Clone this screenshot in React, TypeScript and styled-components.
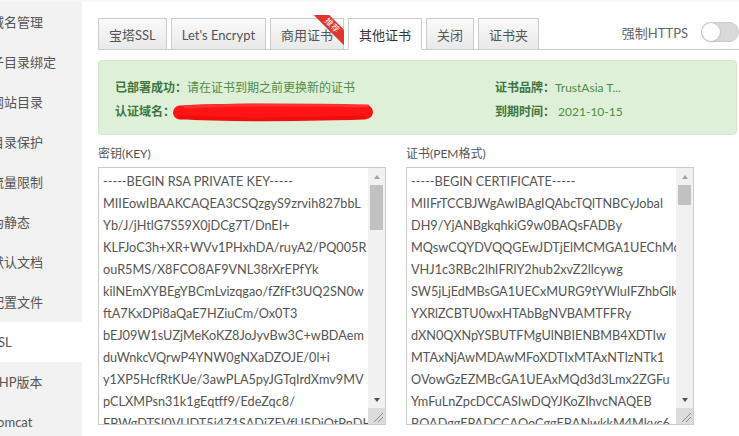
import React from "react";
import styled, { createGlobalStyle } from "styled-components";

const FONT = `"Lato", "Noto Sans CJK SC", sans-serif`;

const Global = createGlobalStyle`
  html, body { margin: 0; padding: 0; background: #fff; }
  body { font-family: ${FONT}; font-size: 13px; color: #555; }
  *, *::before, *::after { box-sizing: border-box; }
`;

const Page = styled.div`
  width: 739px;
  height: 436px;
  overflow: hidden;
  display: flex;
  border-top: 2px solid #f7f7f7;
`;

const Sidebar = styled.nav`
  width: 82px;
  flex: none;
  background: #f2f2f2;
  display: flex;
  flex-direction: column;
`;

const NavItem = styled.div<{ $active?: boolean }>`
  height: 40px;
  flex: none;
  line-height: 40px;
  font-size: 13px;
  color: #555;
  white-space: nowrap;
  overflow: hidden;
  text-indent: -9px;
  background: ${(p) => (p.$active ? "#fff" : "transparent")};
`;

const Main = styled.main`
  flex: 1;
  min-width: 0;
  overflow: hidden;
  padding: 16px 0 0 16px;
  display: flex;
  flex-direction: column;
`;

const TabBar = styled.div`
  display: flex;
  height: 32px;
  flex: none;
  border-bottom: 1px solid #ccc;
`;

const Tabs = styled.div`
  display: flex;
  gap: 4px;
`;

const Tab = styled.div<{ $active?: boolean }>`
  position: relative;
  height: 32px;
  padding: 2px 10px 0;
  line-height: 28px;
  font-size: 13px;
  white-space: nowrap;
  border: 1px solid #ccc;
  border-bottom-color: ${(p) => (p.$active ? "#fff" : "#ccc")};
  color: ${(p) => (p.$active ? "#333" : "#555")};
  background: ${(p) =>
    p.$active ? "#fff" : "linear-gradient(to bottom, #fafafa, #e9e9e9)"};
`;

const Ribbon = styled.span`
  position: absolute;
  top: -4px;
  right: -1px;
  width: 31px;
  height: 31px;
  overflow: hidden;
  pointer-events: none;
`;

const RibbonBand = styled.span`
  position: absolute;
  left: -3px;
  top: 5px;
  width: 44px;
  height: 11px;
  background: #e0352c;
  color: #fff;
  font-size: 8px;
  line-height: 11px;
  text-align: center;
  letter-spacing: 0.5px;
  transform: rotate(45deg);
`;

const ForceHttps = styled.div`
  margin-left: auto;
  display: flex;
  align-items: center;
  gap: 13px;
  padding-bottom: 3px;
  font-size: 13px;
  color: #666;
  white-space: nowrap;
`;

const Switch = styled.span`
  position: relative;
  flex: none;
  width: 38px;
  height: 20px;
  border-radius: 10px;
  background: #d9d9d9;
  border: 1px solid #cdcdcd;

  &::after {
    content: "";
    position: absolute;
    left: 0;
    top: 0;
    width: 18px;
    height: 18px;
    border-radius: 50%;
    background: #fff;
    box-shadow: 0 0 0 1px #c8c8c8, 0 1px 2px rgba(0, 0, 0, 0.12);
  }
`;

const Alert = styled.div`
  margin: 10px 2px 0 0;
  padding: 15px 16px 10px;
  background: #dff0d8;
  border: 1px solid #d3e8c6;
  border-radius: 4px;
  display: grid;
  grid-template-columns: 380px 1fr;
  grid-auto-rows: 24px;
  line-height: 24px;
  font-size: 12px;
  color: #3c763d;
`;

const Field = styled.div`
  display: flex;
  align-items: center;
  white-space: nowrap;
  height: 24px;
`;

const FieldLabel = styled.span`
  font-weight: 700;
  color: #3c763d;
`;

const FieldValue = styled.span`
  color: #4e8c46;
`;

const Scribble = styled.svg`
  display: block;
  margin-left: -4px;
  flex: none;
`;

const Editors = styled.div`
  margin-top: 9px;
  display: grid;
  grid-template-columns: 288px 288px;
  column-gap: 20px;
`;

const Editor = styled.div`
  display: flex;
  flex-direction: column;
`;

const EditorLabel = styled.div`
  height: 20px;
  line-height: 20px;
  font-size: 12px;
  color: #555;
`;

const EditorBox = styled.div`
  position: relative;
  margin-top: 3px;
  height: 258px;
`;

const Code = styled.textarea`
  display: block;
  width: 100%;
  height: 100%;
  margin: 0;
  padding: 2px 20px 0 4px;
  border: 1px solid #ccc;
  outline: none;
  resize: none;
  overflow: hidden;
  white-space: pre;
  font-family: ${FONT};
  font-size: 12.7px;
  line-height: 22px;
  color: #555;
  background: #fff;
`;

const ScrollBar = styled.div`
  position: absolute;
  top: 1px;
  right: 1px;
  bottom: 1px;
  width: 17px;
  display: flex;
  flex-direction: column;
  background: #f1f1f1;
  pointer-events: none;
`;

const ScrollButton = styled.div<{ $dir: "up" | "down" }>`
  height: 17px;
  flex: none;
  display: flex;
  align-items: center;
  justify-content: center;

  &::before {
    content: "";
    border-left: 3.5px solid transparent;
    border-right: 3.5px solid transparent;
    ${(p) =>
      p.$dir === "up"
        ? "border-bottom: 4px solid #a3a3a3;"
        : "border-top: 4px solid #505050;"}
  }
`;

const ScrollTrack = styled.div`
  flex: 1;
  position: relative;
`;

const ScrollThumb = styled.div`
  position: absolute;
  left: 2px;
  right: 2px;
  background: #c1c1c1;
`;

const ScrollCorner = styled.div`
  height: 16px;
  flex: none;
  background: #dcdcdc;
  display: flex;
  align-items: flex-end;
  justify-content: flex-end;
`;

const B64 = "ABCDEFGHIJKLMNOPQRSTUVWXYZabcdefghijklmnopqrstuvwxyz0123456789+/";
function filler(count: number, seed: number): string[] {
  let s = seed;
  const out: string[] = [];
  for (let i = 0; i < count; i++) {
    let line = "";
    const len = 30 + (i % 3) * 2;
    for (let j = 0; j < len; j++) {
      s = (s * 1103515245 + 12345) & 0x7fffffff;
      line += B64[(s >> 8) % 64];
    }
    out.push(line);
  }
  return out;
}

const KEY_LINES = [
  "-----BEGIN RSA PRIVATE KEY-----",
  "MIIEowIBAAKCAQEA3CSQzgyS9zrvih827bbL",
  "Yb/J/jHtlG7S59X0jDCg7T/DnEI+",
  "KLFJoC3h+XR+WVv1PHxhDA/ruyA2/PQ005R",
  "ouR5MS/X8FCO8AF9VNL38rXrEPfYk",
  "kilNEmXYBEgYBCmLvizqgao/fZfFt3UQ2SN0w",
  "ftA7KxDPi8aQaE7HZiuCm/Ox0T3",
  "bEJ09W1sUZjMeKoKZ8JoJyvBw3C+wBDAem",
  "duWnkcVQrwP4YNW0gNXaDZOJE/0l+i",
  "y1XP5HcfRtKUe/3awPLA5pyJGTqIrdXmv9MV",
  "pCLXMPsn31k1gEqtff9/EdeZqc8/",
  "FBWgDTSI0VUDT5i4Z1SADiZEVfU5DiOtPnDH",
  ...filler(40, 7),
  "-----END RSA PRIVATE KEY-----",
];

const CERT_LINES = [
  "-----BEGIN CERTIFICATE-----",
  "MIIFrTCCBJWgAwIBAgIQAbcTQlTNBCyJobal",
  "DH9/YjANBgkqhkiG9w0BAQsFADBy",
  "MQswCQYDVQQGEwJDTjElMCMGA1UEChMc",
  "VHJ1c3RBc2lhIFRlY2hub2xvZ2llcywg",
  "SW5jLjEdMBsGA1UECxMURG9tYWluIFZhbGlk",
  "YXRlZCBTU0wxHTAbBgNVBAMTFFRy",
  "dXN0QXNpYSBUTFMgUlNBIENBMB4XDTIw",
  "MTAxNjAwMDAwMFoXDTIxMTAxNTIzNTk1",
  "OVowGzEZMBcGA1UEAxMQd3d3Lmx2ZGFu",
  "YmFuLnZpcDCCASIwDQYJKoZIhvcNAQEB",
  "BQADggEPADCCAQoCggEBANwkkM4Mkyc6",
  ...filler(100, 13),
  "-----END CERTIFICATE-----",
];

const NAV = [
  "域名管理",
  "子目录绑定",
  "网站目录",
  "目录保护",
  "流量限制",
  "伪静态",
  "默认文档",
  "配置文件",
  "SSL",
  "PHP版本",
  "Tomcat",
];

const TABS = ["宝塔SSL", "Let's Encrypt", "商用证书", "其他证书", "关闭", "证书夹"];

function CodeEditor({
  label,
  lines,
  thumb,
}: {
  label: string;
  lines: string[];
  thumb: number;
}) {
  return (
    <Editor>
      <EditorLabel>{label}</EditorLabel>
      <EditorBox>
        <Code wrap="off" spellCheck={false} readOnly value={lines.join("\n")} />
        <ScrollBar>
          <ScrollButton $dir="up" />
          <ScrollTrack>
            <ScrollThumb style={{ top: 0, height: thumb }} />
          </ScrollTrack>
          <ScrollButton $dir="down" />
          <ScrollCorner>
            <svg width="16" height="16" viewBox="0 0 16 16">
              <path d="M5 14 L14 5 M9 14 L14 9" stroke="#8a8a8a" strokeWidth="1" fill="none" />
            </svg>
          </ScrollCorner>
        </ScrollBar>
      </EditorBox>
    </Editor>
  );
}

export default function App() {
  return (
    <>
      <Global />
      <Page>
        <Sidebar>
          {NAV.map((n) => (
            <NavItem key={n} $active={n === "SSL"}>
              {n}
            </NavItem>
          ))}
        </Sidebar>
        <Main>
          <TabBar>
            <Tabs>
              {TABS.map((t) => (
                <Tab key={t} $active={t === "其他证书"}>
                  {t}
                  {t === "商用证书" && (
                    <Ribbon>
                      <RibbonBand>推荐</RibbonBand>
                    </Ribbon>
                  )}
                </Tab>
              ))}
            </Tabs>
            <ForceHttps>
              强制HTTPS
              <Switch />
            </ForceHttps>
          </TabBar>

          <Alert>
            <Field>
              <FieldLabel>已部署成功：</FieldLabel>
              <FieldValue>请在证书到期之前更换新的证书</FieldValue>
            </Field>
            <Field>
              <FieldLabel>证书品牌：</FieldLabel>
              <FieldValue>TrustAsia T...</FieldValue>
            </Field>
            <Field>
              <FieldLabel>认证域名：</FieldLabel>
              <Scribble width="204" height="24" viewBox="0 0 204 24">
                <path
                  d="M9 12.5 C 45 10, 95 10.5, 140 11.5 S 185 12, 195 12"
                  stroke="#ff1414"
                  strokeWidth="14"
                  strokeLinecap="round"
                  fill="none"
                />
                <path
                  d="M14 7 C 60 4.5, 130 4.5, 197 6"
                  stroke="#ff3030"
                  strokeWidth="3"
                  strokeLinecap="round"
                  fill="none"
                />
                <path
                  d="M8 17 C 50 20, 120 19.5, 194 17.5"
                  stroke="#f20d0d"
                  strokeWidth="4"
                  strokeLinecap="round"
                  fill="none"
                />
              </Scribble>
            </Field>
            <Field>
              <FieldLabel>到期时间：</FieldLabel>
              <FieldValue>&nbsp;2021-10-15</FieldValue>
            </Field>
          </Alert>

          <Editors>
            <CodeEditor label="密钥(KEY)" lines={KEY_LINES} thumb={45} />
            <CodeEditor label="证书(PEM格式)" lines={CERT_LINES} thumb={20} />
          </Editors>
        </Main>
      </Page>
    </>
  );
}
